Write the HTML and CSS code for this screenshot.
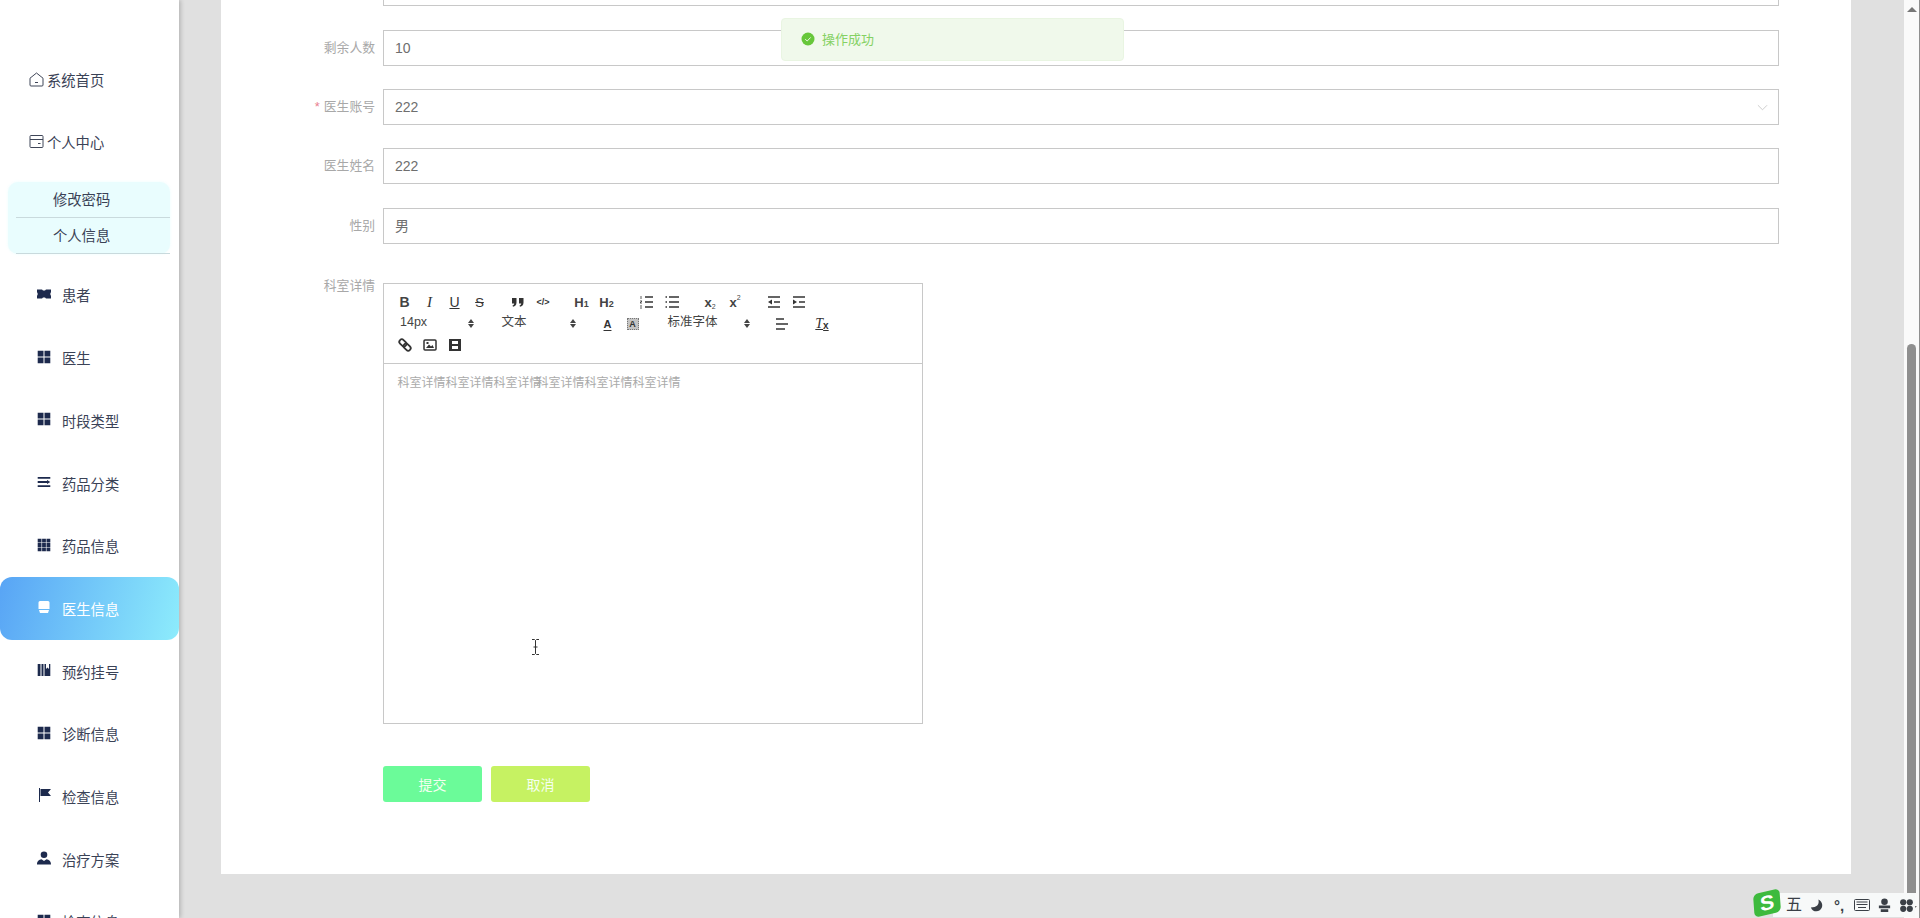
FILE: index.html
```html
<!DOCTYPE html>
<html lang="zh-CN">
<head>
<meta charset="utf-8">
<title>医生信息</title>
<link rel="stylesheet" href="styles.css">
</head>
<body>
<div class="app">
  <aside class="sidebar">
    <a class="top-item"><svg class="top-icon" viewBox="0 0 15 15"><path d="M1 6.200 7.500 1 14 6.200V13a1 1 0 0 1-1 1H2a1 1 0 0 1-1-1z M6 10.500h3"/></svg>系统首页</a>
    <a class="top-item"><svg class="top-icon" viewBox="0 0 15 15"><path d="M1 2.500a1 1 0 0 1 1-1h11a1 1 0 0 1 1 1v10a1 1 0 0 1-1 1H2a1 1 0 0 1-1-1z M1 5.500h13 M9 9.500h2.500"/></svg>个人中心</a>
    <div class="submenu">
      <a class="sub-item">修改密码</a>
      <a class="sub-item">个人信息</a>
    </div>
    <a class="nav-item"><svg class="nav-icon" viewBox="0 0 14 14"><path d="M0 2.500h5l1 1h2l1-1h5v2.500l-.8 2 .8 2v2.500H9l-1-1H6l-1 1H0V9l.8-2L0 5z"/></svg>患者</a>
    <a class="nav-item"><svg class="nav-icon" viewBox="0 0 14 14"><path d="M.7.700h5.800v5.800H.7zM7.500.700h5.800v5.800H7.500zM.7 7.500h5.800v5.800H.7zM7.500 7.500h5.800v5.800H7.500z"/></svg>医生</a>
    <a class="nav-item"><svg class="nav-icon" viewBox="0 0 14 14"><path d="M.7.700h5.800v5.800H.7zM7.500.700h5.800v5.800H7.500zM.7 7.500h5.800v5.800H.7zM7.500 7.500h5.800v5.800H7.500z"/></svg>时段类型</a>
    <a class="nav-item"><svg class="nav-icon" viewBox="0 0 14 14"><path d="M.7 2h12.600v1.800H.7zM.7 6.100h9.300V5l3.300 2-3.300 2V7.900H.7zM.7 10.200h12.600V12H.7z"/></svg>药品分类</a>
    <a class="nav-item"><svg class="nav-icon" viewBox="0 0 14 14"><path d="M.7.700h3.800v3.800H.7zM5.100.700h3.800v3.800H5.100zM9.500.700h3.800v3.800H9.500zM.7 5.100h3.800v3.800H.7zM5.100 5.100h3.800v3.800H5.100zM9.500 5.100h3.800v3.800H9.500zM.7 9.500h3.800v3.800H.7zM5.100 9.500h3.800v3.800H5.100zM9.500 9.500h3.800v3.800H9.500z"/></svg>药品信息</a>
    <a class="nav-item active"><svg class="nav-icon" viewBox="0 0 14 14"><path d="M3 1h8a1.500 1.500 0 0 1 1.500 1.500V9h-11V2.500A1.500 1.500 0 0 1 3 1zM2 10h10l-1 3H3z"/></svg>医生信息</a>
    <a class="nav-item"><svg class="nav-icon" viewBox="0 0 14 14"><path d="M.7 1h2.800v12H.7zM4.500 1h2v12h-2zM7.500 1H9v5l1.500-1.500L12 6V1h1.300v12H7.500z"/></svg>预约挂号</a>
    <a class="nav-item"><svg class="nav-icon" viewBox="0 0 14 14"><path d="M.7.700h5.800v5.800H.7zM7.500.700h5.800v5.800H7.500zM.7 7.500h5.800v5.800H.7zM7.500 7.500h5.800v5.800H7.500z"/></svg>诊断信息</a>
    <a class="nav-item"><svg class="nav-icon" viewBox="0 0 14 14"><path d="M2 0h1v14H2zM3.500 1H14l-3 3.500L14 8H3.500z"/></svg>检查信息</a>
    <a class="nav-item"><svg class="nav-icon" viewBox="0 0 14 14"><circle cx="7" cy="3.800" r="3.300"/><path d="M0 13.500c0-3.500 2-5 4.500-5.300L7 10l2.500-1.800c2.500.3 4.500 1.800 4.500 5.300z"/></svg>治疗方案</a>
    <a class="nav-item"><svg class="nav-icon" viewBox="0 0 14 14"><path d="M.7.700h5.800v5.800H.7zM7.500.700h5.800v5.800H7.500zM.7 7.500h5.800v5.800H.7zM7.500 7.500h5.800v5.800H7.500z"/></svg>检查信息</a>
  </aside>

  <main class="main">
    <section class="card">
      <form class="form">
        <div class="row"><div class="label"></div><div class="field"></div></div>
        <div class="row"><label class="label">剩余人数</label><div class="field">10</div></div>
        <div class="row"><label class="label"><span class="star">*</span>医生账号</label><div class="field">222<svg class="chevron" viewBox="0 0 12 7"><path d="M1 1l5 5 5-5"/></svg></div></div>
        <div class="row"><label class="label">医生姓名</label><div class="field">222</div></div>
        <div class="row"><label class="label">性别</label><div class="field">男</div></div>
        <div class="row row-editor">
          <label class="label label-top">科室详情</label>
          <div class="editor">
            <div class="toolbar">
              <div class="tb-line">
                <span class="fmt">
                  <span class="tb tb-b">B</span><span class="tb tb-i">I</span><span class="tb tb-u">U</span><span class="tb tb-s">S</span>
                </span>
                <span class="fmt">
                  <span class="tb"><svg class="qi" viewBox="0 0 18 18"><path class="fill" d="M3 5h4.500v4.500C7.500 12 6 13.300 4 13.800l-.5-1.300c1-.4 1.600-1 1.700-2H3zM10 5h4.500v4.500c0 2.500-1.500 3.800-3.500 4.300l-.5-1.300c1-.4 1.600-1 1.700-2H10z"/></svg></span>
                  <span class="tb tb-code">&lt;/&gt;</span>
                </span>
                <span class="fmt fmt-wide">
                  <span class="tb tb-h">H<small>1</small></span><span class="tb tb-h">H<small>2</small></span>
                </span>
                <span class="fmt">
                  <span class="tb"><svg class="qi" viewBox="0 0 18 18"><path class="line" d="M7 4h8M7 9h8M7 14h8"/><path class="fine" d="M3 3v3M2 8h2l-2 2h2M2 13h2M2 15h2"/></svg></span>
                  <span class="tb"><svg class="qi" viewBox="0 0 18 18"><path class="line" d="M6 4h10M6 9h10M6 14h10M2.500 4h1.500M2.500 9h1.500M2.500 14h1.500"/></svg></span>
                </span>
                <span class="fmt">
                  <span class="tb tb-x">x<small>2</small></span><span class="tb tb-x tb-up">x<small>2</small></span>
                </span>
                <span class="fmt">
                  <span class="tb"><svg class="qi" viewBox="0 0 18 18"><path class="line" d="M3 4h12M9 9h6M3 14h12"/><path class="fill" d="M7 6.500v5L3 9z"/></svg></span>
                  <span class="tb"><svg class="qi" viewBox="0 0 18 18"><path class="line" d="M3 4h12M9 9h6M3 14h12"/><path class="fill" d="M3 6.500v5L7 9z"/></svg></span>
                </span>
              </div>
              <div class="tb-line">
                <span class="fmt"><span class="picker">14px</span></span>
                <span class="fmt"><span class="picker">文本</span></span>
                <span class="fmt">
                  <span class="tb tb-color">A</span><span class="tb tb-bgcolor"><span class="bg-a">A</span></span>
                </span>
                <span class="fmt"><span class="picker picker-font">标准字体</span></span>
                <span class="fmt fmt-align">
                  <span class="tb"><svg class="qi" viewBox="0 0 18 18"><path class="line" d="M3 4h8M3 9h12M3 14h9"/></svg></span>
                </span>
                <span class="fmt">
                  <span class="tb tb-clean">T<small>x</small></span>
                </span>
              </div>
              <div class="tb-line tb-line-last">
                <span class="fmt">
                  <span class="tb"><svg class="qi" viewBox="0 0 18 18"><g class="thick"><rect x="2" y="6.500" width="8" height="5" rx="2.500" transform="rotate(45 9 9)"/><rect x="8" y="6.500" width="8" height="5" rx="2.500" transform="rotate(45 9 9)"/></g></svg></span>
                  <span class="tb"><svg class="qi" viewBox="0 0 18 18"><rect class="line" x="3" y="4" width="12" height="10" rx="1"/><path class="fill" d="M5 12l3-3.500 2 2 1.500-1.500 1.500 3zM5.500 6h2v2h-2z"/></svg></span>
                  <span class="tb"><svg class="qi" viewBox="0 0 18 18"><path class="fill" d="M3 3h12v12H3zM6 5v3h6V5zM6 10v3h6v-3z"/></svg></span>
                </span>
              </div>
            </div>
            <div class="editor-body"><span>科室详情科室详情科室详情</span><span class="overlap">科室详情科室详情科室详情</span></div>
          </div>
        </div>
        <div class="actions">
          <button type="button" class="btn btn-submit">提交</button>
          <button type="button" class="btn btn-cancel">取消</button>
        </div>
      </form>
    </section>
  </main>

  <div class="scrollbar">
    <span class="arrow arrow-up"></span>
    <span class="thumb"></span>
    <span class="arrow arrow-down"></span>
  </div>
</div>

<div class="toast"><svg class="toast-icon" viewBox="0 0 14 14"><circle cx="7" cy="7" r="6.500"/><path d="M4.200 7.200 6.200 9l3.500-3.600"/></svg>操作成功</div>

<svg class="cursor" viewBox="0 0 9 16"><path d="M1 .5h2.500L4.500 1.500 5.500.5H8M4.500 1.500v13M1 15.500h2.500l1-1 1 1H8M2.500 8h4"/></svg>

<div class="ime">
  <span class="ime-logo">S</span>
  <span class="ime-wu">五</span>
  <svg class="ime-icon" viewBox="0 0 16 16"><path d="M10 1.500C11.500 7 8 10 2 10c1.500 4 6 5.500 9.500 3C15.500 10 15 4 10 1.500z"/></svg>
  <span class="ime-punct">°,</span>
  <svg class="ime-icon ime-key" viewBox="0 0 16 12"><rect x=".5" y=".5" width="15" height="11" rx="1"/><path d="M2.500 3h11M2.500 5.500h11M4 8.500h8"/></svg>
  <svg class="ime-icon" viewBox="0 0 16 16"><circle cx="8" cy="4" r="3.500"/><path d="M2 8h12v3H2zM4 12h8v3H4z"/></svg>
  <svg class="ime-icon" viewBox="0 0 16 16"><circle cx="4.500" cy="4.500" r="3.300"/><circle cx="11.500" cy="4.500" r="3.300"/><circle cx="4.500" cy="11.500" r="3.300"/><circle cx="11.500" cy="11.500" r="3.300"/></svg>
</div>
</body>
</html>
```

FILE: styles.css
```css
* { box-sizing: border-box; }
html, body { margin: 0; height: 100%; overflow: hidden; }
body {
  font-family: "Liberation Sans", "Noto Sans CJK SC", sans-serif;
  font-size: 14px;
  color: #333;
  background: #e0e0e0;
}
.app { display: flex; height: 918px; overflow: hidden; }

/* sidebar */
.sidebar {
  width: 179px;
  flex: none;
  height: 918px;
  overflow: hidden;
  padding-top: 49px;
  background: #fff;
  box-shadow: 2px 0 4px rgba(0, 0, 0, .18);
  position: relative;
  z-index: 2;
  color: #3a4256;
  font-size: 14.300px;
}
.top-item {
  display: flex;
  align-items: center;
  height: 62px;
  padding: 0 0 1px 29px;
  gap: 3px;
}
.top-icon { width: 15px; height: 15px; fill: none; stroke: #3f4658; stroke-width: 1; margin-top: -1px; }
.submenu {
  margin: 9px 9px 9.600px 8px;
  background: #e9fdfe;
  border-radius: 10px;
  box-shadow: 0 0 3px rgba(233, 253, 254, .9);
}
.sub-item {
  display: flex;
  align-items: center;
  height: 36px;
  margin-left: 8px;
  padding: 0 0 2px 37px;
  border-bottom: 1px solid #c9dadd;
}
.nav-item {
  display: flex;
  align-items: center;
  height: 62.700px;
  padding-left: 37px;
  gap: 11px;
  border-radius: 12px;
}
.nav-icon { width: 14px; height: 14px; fill: #1d2a4d; flex: none; margin-top: -2px; }
.nav-item.active {
  color: #fff;
  background: linear-gradient(105deg, #58a4f5 0%, #8decfc 100%);
}
.nav-item.active .nav-icon { fill: #fff; }

/* main */
.main { flex: 1; min-width: 0; height: 918px; overflow: hidden; padding-left: 42px; }
.card { width: 1630px; background: #fff; padding: 0 72px 72px 0; overflow: hidden; }
.form .row:first-child { margin-top: -29.600px; }
.row { display: flex; margin-bottom: 23.300px; }
.label {
  width: 162px;
  flex: none;
  padding-right: 8px;
  text-align: right;
  font-size: 12.800px;
  line-height: 36px;
  color: #a8a8a8;
}
.label-top { line-height: 5px; }
.star { color: #e9808f; margin-right: 4px; }
.field {
  flex: 1;
  min-width: 0;
  height: 36px;
  border: 1px solid #c8c8c8;
  padding-left: 11px;
  line-height: 34px;
  font-size: 14px;
  color: #6e6e6e;
  background: #fff;
  display: flex;
  align-items: center;
  justify-content: space-between;
}
.chevron { width: 11px; height: 7px; margin-right: 10px; fill: none; stroke: #c8c8c8; stroke-width: 1; }
.row-editor { margin-top: 39.300px; margin-bottom: 42px; }

/* editor */
.editor { width: 540px; height: 441px; border: 1px solid #c8c8c8; display: flex; flex-direction: column; }
.toolbar { height: 80px; flex: none; padding: 7.500px 8px 0; border-bottom: 1px solid #c8c8c8; }
.tb-line { display: flex; height: 21.500px; align-items: center; }
.fmt { display: inline-flex; align-items: center; margin-right: 13.500px; }
.fmt-wide { margin-right: 15px; }
.fmt-align { margin-right: 15.500px; }
.tb {
  width: 25px;
  height: 21px;
  display: inline-flex;
  align-items: center;
  justify-content: center;
  font-size: 13px;
  color: #333;
}
.tb small { font-size: 8px; }
.tb-b { font-weight: 700; font-size: 14px; color: #444; }
.tb-i { font-style: italic; font-family: "Liberation Serif", serif; font-size: 15px; }
.tb-u { text-decoration: underline; font-size: 14px; }
.tb-s { text-decoration: line-through; font-size: 13px; }
.tb-code { font-size: 9px; font-weight: 700; }
.tb-h { font-size: 13px; font-weight: 700; color: #444; }
.tb-h small { font-weight: 700; font-size: 9px; padding-top: 3px; }
.tb-x { font-weight: 700; font-size: 13px; color: #444; }
.tb-x small { align-self: flex-end; margin-bottom: 3px; font-weight: 400; font-size: 7px; }
.tb-up small { align-self: flex-start; margin-top: 2px; margin-bottom: 0; }
.tb-color { font-weight: 700; font-size: 11px; text-decoration: underline; text-underline-offset: 2px; }
.bg-a {
  width: 12px;
  height: 12px;
  display: flex;
  align-items: center;
  justify-content: center;
  background: #c4c4c4;
  font-weight: 700;
  font-size: 9px;
  border: 1px dotted #777;
}
.tb-clean { font-style: italic; font-family: "Liberation Serif", serif; font-size: 14px; text-decoration: underline; }
.tb-clean small { font-family: "Liberation Sans", sans-serif; font-weight: 700; font-size: 10px; font-style: normal; padding-top: 3px; }
.qi { width: 18px; height: 18px; fill: none; }
.qi .line { stroke: #333; stroke-width: 1.500; fill: none; }
.qi .fine { stroke: #333; stroke-width: .8; fill: none; }
.qi .thick { stroke: #333; stroke-width: 1.800; fill: none; }
.qi .fill { fill: #333; }
.picker {
  width: 88px;
  height: 21px;
  padding-left: 8px;
  font-size: 12.500px;
  line-height: 19px;
  color: #444;
  position: relative;
  display: block;
}
.picker::after {
  content: "";
  position: absolute;
  right: 6px;
  top: 6px;
  width: 0;
  height: 0;
  border-left: 3px solid transparent;
  border-right: 3px solid transparent;
  border-bottom: 4px solid #444;
}
.picker::before {
  content: "";
  position: absolute;
  right: 6px;
  top: 11px;
  width: 0;
  height: 0;
  border-left: 3px solid transparent;
  border-right: 3px solid transparent;
  border-top: 4px solid #444;
}
.picker-font { width: 97px; padding-left: 9px; }
.editor-body { flex: 1; padding: 12px 13.500px; font-size: 12px; line-height: 14px; color: #aaa; white-space: nowrap; }
.overlap { margin-left: -5px; }

/* buttons */
.actions { display: flex; gap: 9px; padding-left: 162px; }
.btn {
  width: 99px;
  height: 36px;
  border: 0;
  border-radius: 3px;
  padding: 0;
  font: inherit;
  color: #f4fff0;
}
.btn-submit { background: #6bfb99; }
.btn-cancel { background: #c6f262; }

/* scrollbar */
.scrollbar {
  width: 16px;
  flex: none;
  height: 918px;
  background: #fafafa;
  border-right: 1px solid #8f8f8f;
  position: relative;
}
.thumb {
  position: absolute;
  left: 3px;
  top: 344px;
  width: 9px;
  height: 549px;
  background: #8f8f8f;
  border-radius: 5px 5px 0 0;
}
.arrow { position: absolute; left: 3px; width: 0; height: 0; border-left: 5px solid transparent; border-right: 5px solid transparent; }
.arrow-up { top: 7px; border-bottom: 5px solid #777; }
.arrow-down { bottom: 7px; border-top: 5px solid #777; }

/* overlays */
.toast {
  position: absolute;
  left: 781px;
  top: 18px;
  width: 343px;
  height: 43px;
  display: flex;
  align-items: center;
  gap: 7px;
  padding: 0 0 2px 19px;
  background: #f0f9eb;
  border: 1px solid #e9f5e2;
  border-radius: 4px;
  color: #85d163;
  font-size: 13px;
  z-index: 5;
}
.toast-icon { width: 14px; height: 14px; }
.toast-icon circle { fill: #67c73a; }
.toast-icon path { fill: none; stroke: #e8f8e0; stroke-width: 1; }
.cursor {
  position: absolute;
  left: 531px;
  top: 639px;
  width: 9px;
  height: 16px;
  fill: none;
  stroke: #333;
  stroke-width: 1;
  z-index: 6;
}
.ime {
  position: absolute;
  left: 1773px;
  top: 893px;
  width: 142px;
  height: 24px;
  display: flex;
  align-items: center;
  gap: 7px;
  padding-left: 13px;
  background: #f7f9f9;
  z-index: 7;
}
.ime-logo {
  position: absolute;
  left: -19px;
  top: -2px;
  width: 26px;
  height: 24px;
  display: flex;
  align-items: center;
  justify-content: center;
  background: #3dba3d;
  border-radius: 5px;
  transform: skewX(-10deg) rotate(-14deg);
  color: #fff;
  font-weight: 700;
  font-size: 21px;
}
.ime-wu { font-size: 16px; color: #3a3f46; width: 16px; line-height: 1; }
.ime-icon { width: 15px; height: 15px; fill: #3a3f46; flex: none; }
.ime-punct { width: 16px; font-size: 15px; font-weight: 700; color: #3a3f46; text-align: center; line-height: 1; }
.ime-key { fill: none; stroke: #3a3f46; stroke-width: 1; height: 12px; width: 16px; }
```
